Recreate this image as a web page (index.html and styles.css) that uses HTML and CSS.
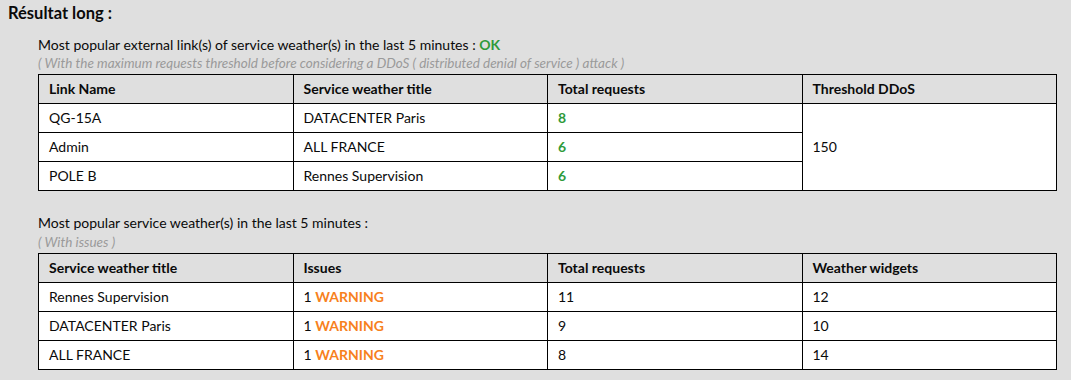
FILE: index.html
```html
<!DOCTYPE html>
<html>
<head>
<meta charset="utf-8">
<link rel="stylesheet" href="styles.css">
</head>
<body>
<h2 class="title">Résultat long :</h2>
<div class="content">
  <section class="block">
    <p class="lead">Most popular external link(s) of service weather(s) in the last 5 minutes : <span class="ok">OK</span></p>
    <p class="note">( With the maximum requests threshold before considering a DDoS ( distributed denial of service ) attack )</p>
    <table class="grid">
      <thead>
        <tr><th>Link Name</th><th>Service weather title</th><th>Total requests</th><th>Threshold DDoS</th></tr>
      </thead>
      <tbody>
        <tr><td>QG-15A</td><td>DATACENTER Paris</td><td class="ok">8</td><td rowspan="3">150</td></tr>
        <tr><td>Admin</td><td>ALL FRANCE</td><td class="ok">6</td></tr>
        <tr><td>POLE B</td><td>Rennes Supervision</td><td class="ok">6</td></tr>
      </tbody>
    </table>
  </section>
  <section class="block second">
    <p class="lead">Most popular service weather(s) in the last 5 minutes :</p>
    <p class="note">( With issues )</p>
    <table class="grid">
      <thead>
        <tr><th>Service weather title</th><th>Issues</th><th>Total requests</th><th>Weather widgets</th></tr>
      </thead>
      <tbody>
        <tr><td>Rennes Supervision</td><td>1 <span class="warn">WARNING</span></td><td>11</td><td>12</td></tr>
        <tr><td>DATACENTER Paris</td><td>1 <span class="warn">WARNING</span></td><td>9</td><td>10</td></tr>
        <tr><td>ALL FRANCE</td><td>1 <span class="warn">WARNING</span></td><td>8</td><td>14</td></tr>
      </tbody>
    </table>
  </section>
</div>
</body>
</html>
```
FILE: styles.css
```css
html, body {
  margin: 0;
  padding: 0;
  background: #dfdfdf;
  font-family: Lato, "Open Sans", sans-serif;
  color: #0a0a0a;
}
.title {
  margin: 0;
  padding: 3px 8px 0;
  font-size: 16.5px;
  font-weight: bold;
  line-height: 20px;
}
.content {
  padding: 0 14px 0 38px;
}
.block {
  margin-top: 12px;
}
.block.second {
  margin-top: 22px;
}
.lead {
  margin: 0;
  font-size: 14px;
  line-height: 19px;
}
.note {
  margin: 0 0 1px;
  font-size: 13.5px;
  line-height: 19px;
  font-style: italic;
  color: #9a9a9a;
}
.second .note {
  margin-bottom: 1px;
  line-height: 20px;
}
.ok {
  color: #2f9a3a;
  font-weight: bold;
}
.warn {
  color: #f7811d;
  font-weight: bold;
}
.grid {
  width: 1019px;
  border-collapse: collapse;
  table-layout: fixed;
  font-size: 14px;
}
.grid th, .grid td {
  border: 1px solid #000;
  height: 29px;
  padding: 0 10px;
  text-align: left;
  line-height: 16px;
  box-sizing: border-box;
}
.grid th {
  background: #dfdfdf;
  font-weight: bold;
}
.grid td {
  background: #fff;
}
```
